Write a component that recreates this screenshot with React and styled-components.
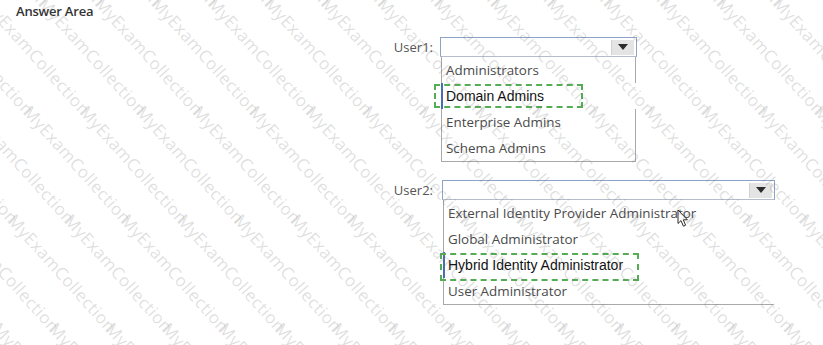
import styled, { createGlobalStyle } from "styled-components";

const GlobalStyle = createGlobalStyle`
  body {
    margin: 0;
    background: #ffffff;
    font-family: "Open Sans", "Noto Sans", sans-serif;
  }
`;

const questions = [
  {
    label: "User1:",
    width: 197,
    shift: 0,
    answer: 1,
    boxWidth: 149,
    boxHeight: 24,
    boxLeft: -7,
    rightBorder: true,
    options: ["Administrators", "Domain Admins", "Enterprise Admins", "Schema Admins"],
  },
  {
    label: "User2:",
    width: 333,
    shift: 2,
    answer: 2,
    boxWidth: 199,
    boxHeight: 28,
    boxLeft: -3,
    rightBorder: false,
    options: [
      "External Identity Provider Administrator",
      "Global Administrator",
      "Hybrid Identity Administrator",
      "User Administrator",
    ],
  },
];

// watermark geometry, measured on the screenshot
const ANGLE = 48;
const PERIOD = 146;
const ROW = 42;
const ROWS = 23;
const LIFT = 640;

function rowOffset(k) {
  const v = ROW * k + ROW / 2 - LIFT;
  const u = 13.4 - 0.9 * (v + 14.9);
  return (((u % PERIOD) + PERIOD) % PERIOD) - PERIOD;
}

const Watermark = () => (
  <Mark>
    <MarkLayer>
      {Array.from({ length: ROWS }, (_, k) => (
        <MarkRow key={k} style={{ marginLeft: rowOffset(k) }}>
          {Array.from({ length: 8 }, (_, i) => (
            <MarkWord key={i}>MyExamCollection</MarkWord>
          ))}
        </MarkRow>
      ))}
    </MarkLayer>
  </Mark>
);

const Cursor = () => (
  <Pointer width="13" height="19" viewBox="0 0 13 19">
    <path
      d="M1 1 L1 14.5 L4 11.6 L6.4 17.2 L8.6 16.2 L6.3 10.8 L10.4 10.8 Z"
      fill="#ffffff"
      stroke="#2a2a2a"
      strokeWidth="1"
      strokeLinejoin="round"
    />
  </Pointer>
);

const App = () => {
  return (
    <Page>
      <GlobalStyle />
      <Title>Answer Area</Title>
      <Form>
        {questions.map((q, qi) => (
          <Field key={q.label}>
            <Label>{q.label}</Label>
            <Dropdown $width={q.width} $shift={q.shift}>
              <Select>
                <Caret>
                  <svg width="10" height="6" viewBox="0 0 10 6">
                    <path d="M0 0 L10 0 L5 6 Z" fill="#2b2b2b" />
                  </svg>
                </Caret>
              </Select>
              <List $rightBorder={q.rightBorder}>
                {q.options.map((opt, i) =>
                  i === q.answer ? (
                    <Picked key={opt}>
                      {opt}
                      <Dashed $left={q.boxLeft} $w={q.boxWidth} $h={q.boxHeight} />
                    </Picked>
                  ) : (
                    <Item key={opt}>
                      {opt}
                      {qi === 1 && i === 0 && <Cursor />}
                    </Item>
                  )
                )}
              </List>
            </Dropdown>
          </Field>
        ))}
      </Form>
      <Watermark />
    </Page>
  );
};

const Page = styled.div`
  position: relative;
  width: 823px;
  height: 345px;
  overflow: hidden;
  padding: 2px 0 0 16px;
  box-sizing: border-box;
`;

const Title = styled.div`
  font-size: 13px;
  font-weight: 600;
  line-height: 18px;
  color: #333333;
  letter-spacing: -0.2px;
`;

const Form = styled.div`
  display: flex;
  flex-direction: column;
  gap: 18px;
  margin-top: 17px;
`;

const Field = styled.div`
  display: grid;
  grid-template-columns: 417px auto;
  column-gap: 7px;
  align-items: start;
`;

const Label = styled.div`
  text-align: right;
  font-size: 13px;
  line-height: 20px;
  color: #555555;
`;

const Dropdown = styled.div`
  width: ${(p) => p.$width}px;
  margin-left: ${(p) => p.$shift}px;
  display: flex;
  flex-direction: column;
`;

const Select = styled.div`
  height: 18px;
  border: 1px solid #8ea3c8;
  border-bottom-color: #b5bdcc;
  background: #ffffff;
  display: flex;
  justify-content: flex-end;
  align-items: center;
  padding-right: 2px;
`;

const Caret = styled.div`
  width: 22px;
  height: 15px;
  background: #e4e4e4;
  border-left: 1px solid #d2d2d2;
  display: flex;
  align-items: center;
  justify-content: center;
`;

const List = styled.div`
  margin: 0 1px;
  border: 1px solid #a9a9a9;
  border-top: none;
  border-right-color: ${(p) => (p.$rightBorder ? "#a9a9a9" : "transparent")};
  background: #ffffff;
`;

const Item = styled.div`
  position: relative;
  height: 26px;
  line-height: 27px;
  padding-left: 4px;
  font-size: 13.4px;
  color: #4a4a4a;
  white-space: nowrap;
`;

const Picked = styled(Item)`
  font-family: "Liberation Sans", Arial, sans-serif;
  font-size: 14px;
  color: #111111;
  background: #ffffff;
  margin-right: -3px;
  box-shadow: inset 2px 0 0 #4a6db0;
  margin-left: -1px;
  padding-left: 5px;
`;

const Dashed = styled.span`
  position: absolute;
  left: ${(p) => p.$left}px;
  top: 1px;
  width: ${(p) => p.$w}px;
  height: ${(p) => p.$h}px;
  box-sizing: border-box;
  border: 2px dashed #54ad54;
`;

const Pointer = styled.svg`
  position: absolute;
  left: 233px;
  top: 9px;
`;

const Mark = styled.div`
  position: absolute;
  inset: 0;
  overflow: hidden;
  pointer-events: none;
`;

const MarkLayer = styled.div`
  position: absolute;
  left: 0;
  top: 0;
  transform-origin: 0 0;
  transform: rotate(${ANGLE}deg) translateY(-${LIFT}px);
`;

const MarkRow = styled.div`
  height: ${ROW}px;
  line-height: ${ROW}px;
  white-space: nowrap;
`;

const MarkWord = styled.span`
  display: inline-block;
  width: ${PERIOD}px;
  font-family: "Open Sans", sans-serif;
  font-size: 17px;
  color: rgba(110, 110, 110, 0.22);
  letter-spacing: 0.4px;
`;

export default App;
